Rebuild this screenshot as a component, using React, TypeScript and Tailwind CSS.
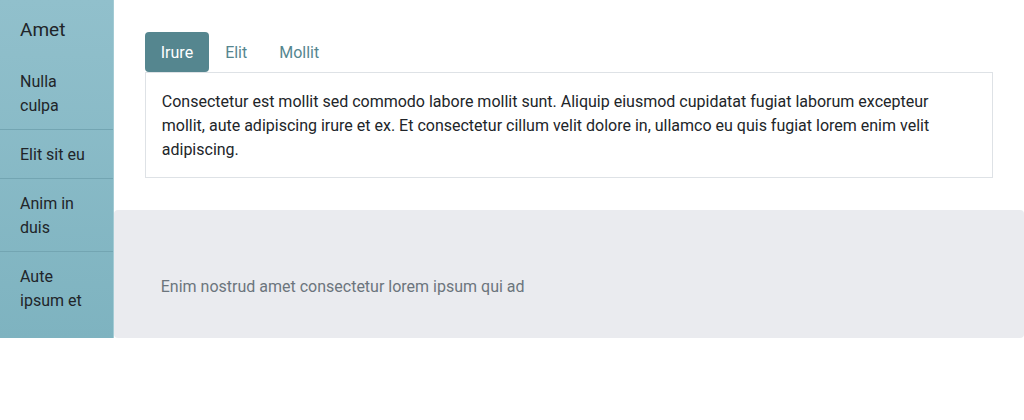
import { useState } from "react";

const links = ["Nulla culpa", "Elit sit eu", "Anim in duis", "Aute ipsum et"];
const tabs = ["Irure", "Elit", "Mollit"];

function Sidebar() {
  return (
    <aside className="w-1/9 shrink-0 border-r border-[#a3cbd4] bg-linear-to-b from-[#91c0cc] to-[#7eb3c0] pt-4 pb-3">
      <h1 className="px-5 pb-[13px] text-[19px] leading-7">Amet</h1>
      <nav aria-label="Sections">
        <ul className="divide-y divide-[#73a5b2]">
          {links.map((label) => (
            <li key={label}>
              <a href="#" className="block px-5 pt-[13px] pb-[11px]">
                {label}
              </a>
            </li>
          ))}
        </ul>
      </nav>
    </aside>
  );
}

function Tabs() {
  const [active, setActive] = useState("Irure");
  return (
    <section className="px-[31px] py-8">
      <div role="tablist" className="flex">
        {tabs.map((label) => (
          <button
            key={label}
            id={`tab-${label}`}
            type="button"
            role="tab"
            aria-selected={label === active}
            aria-controls="tab-panel"
            onClick={() => setActive(label)}
            className={
              label === active
                ? "rounded bg-[#55868f] px-4 pt-[9px] pb-[7px] text-white"
                : "rounded px-4 pt-[9px] pb-[7px] text-[#55868f]"
            }
          >
            {label}
          </button>
        ))}
      </div>
      <div
        id="tab-panel"
        role="tabpanel"
        aria-labelledby={`tab-${active}`}
        className="border border-[#dee2e6] pt-[17px] pr-8 pb-[15px] pl-4"
      >
        Consectetur est mollit sed commodo labore mollit sunt. Aliquip eiusmod
        cupidatat fugiat laborum excepteur mollit, aute adipiscing irure et ex.
        Et consectetur cillum velit dolore in, ullamco eu quis fugiat lorem enim
        velit adipiscing.
      </div>
    </section>
  );
}

export default function App() {
  return (
    <div className="flex bg-white font-['Roboto','Liberation_Sans',sans-serif] text-base leading-6 text-[#212529]">
      <Sidebar />
      <main className="min-w-0 grow">
        <Tabs />
        <footer className="rounded bg-[#eaebef] px-[47px] pt-[65px] pb-[39px] text-[#6c757d]">
          <p>Enim nostrud amet consectetur lorem ipsum qui ad</p>
        </footer>
      </main>
    </div>
  );
}
